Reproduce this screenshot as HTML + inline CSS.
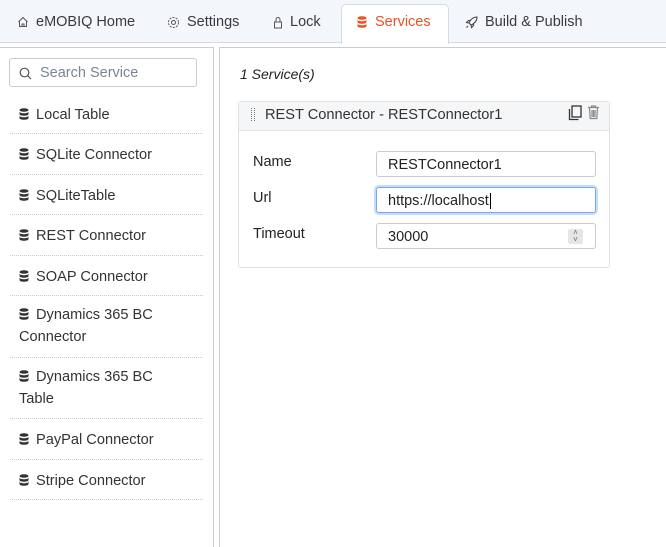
<!DOCTYPE html>
<html><head><meta charset="utf-8"><style>
*{box-sizing:border-box;margin:0;padding:0}
body{width:666px;height:543px;background:#fff;font-family:"Liberation Sans",sans-serif;color:#333;position:relative;overflow:hidden;font-size:14px}
.bar{position:absolute;left:0;top:0;width:666px;height:43px;background:#f3f6fb;border-bottom:1px solid #d6dbe3}
.tab{position:absolute;top:14px;font-size:14.5px;color:#3a3a3a;display:flex;align-items:center;gap:7px}
.act{position:absolute;left:341px;top:4px;width:108px;height:40px;background:#fff;border:1px solid #d6dbe3;border-bottom:none;border-radius:5px 5px 0 0}
.lp{position:absolute;left:0;top:47px;width:214px;height:500px;border-right:1px solid #ccc;border-top:1px solid #ccc}
.rp{position:absolute;left:219px;top:47px;width:460px;height:500px;border-left:1px solid #ccc;border-top:1px solid #ccc}
.search{position:absolute;left:9px;top:58px;width:188px;height:29px;border:1px solid #ccc;border-radius:3px;color:#7a8594;font-size:14.5px;padding:6px 0 0 30px}
.item{position:absolute;left:10px;width:193px;border-bottom:1px dotted #ccc;font-size:14.6px;color:#333;padding:10px 40px 0 9px;line-height:22px}
.db{display:inline-block;width:10px;height:12px;margin-right:7px;vertical-align:-1px}
.card{position:absolute;left:238px;top:101px;width:372px;height:167px;border:1px solid #e3e3e3;border-radius:3px}
.ch{height:29px;background:#f5f6f8;border-bottom:1px solid #e6e6e6}
.lbl{position:absolute;left:253px;font-size:14.5px;color:#222}
.inp{position:absolute;left:376px;width:220px;height:26px;border:1px solid #ccc;border-radius:3px;font-size:14.5px;padding:5px 0 0 11px;color:#222}
</style></head><body>
<div class="bar"></div>
<div class="act"></div>
<div class="tab" style="left:17px"><svg width="12" height="12" viewBox="0 0 12 12" fill="none" stroke="#555" stroke-width="1"><path d="M1.5 6 6 1.5 10.5 6M2.5 5v5.5h7V5M5 10.5V8h2v2.5"/></svg>eMOBIQ Home</div>
<div class="tab" style="left:167px"><svg width="13" height="13" viewBox="0 0 13 13" fill="none" stroke="#555" stroke-width="1"><circle cx="6.5" cy="6.5" r="2"/><circle cx="6.5" cy="6.5" r="5" stroke-dasharray="2 1.2"/></svg>Settings</div>
<div class="tab" style="left:273px"><svg width="10" height="13" viewBox="0 0 10 13" fill="none" stroke="#555" stroke-width="1"><rect x="1.5" y="6" width="7" height="6"/><path d="M3 6V3.5a2 2 0 0 1 4 0V6"/></svg>Lock</div>
<div class="tab" style="left:357px;color:#f04e23;gap:8px"><svg width="10" height="12" viewBox="0 0 10 12"><g fill="#f04e23"><ellipse cx="5" cy="2" rx="4.5" ry="1.8"/><path d="M.5 3.5c0 2.4 9 2.4 9 0V6c0 2.4-9 2.4-9 0zM.5 7.5c0 2.4 9 2.4 9 0V10c0 2.4-9 2.4-9 0z"/></g></svg>Services</div>
<div class="tab" style="left:465px"><svg width="13" height="13" viewBox="0 0 13 13" fill="none" stroke="#444" stroke-width="1.1"><path d="M12 1C8 1 5 4 4 7l2 2c3-1 6-4 6-8zM4 7 1.5 6.5 3.5 4.5H6M6 9l.5 2.5 2-2V7M3 10l-1.5 1.5"/></svg>Build &amp; Publish</div>
<div class="lp"></div><div class="rp"></div>
<div class="search"><svg style="position:absolute;left:9px;top:8px" width="13" height="13" viewBox="0 0 13 13" fill="none" stroke="#555" stroke-width="1.2"><circle cx="5.5" cy="5.5" r="4.3"/><path d="M8.7 8.7 12 12"/></svg>Search Service</div>
<div class="item" style="top:94px;height:40px">DB Local Table</div>
<div class="item" style="top:134px;height:41px">DB SQLite Connector</div>
<div class="item" style="top:175px;height:40px">DB SQLiteTable</div>
<div class="item" style="top:215px;height:41px">DB REST Connector</div>
<div class="item" style="top:256px;height:40px">DB SOAP Connector</div>
<div class="item" style="top:296px;height:62px;padding-top:8px">DB Dynamics 365 BC Connector</div>
<div class="item" style="top:358px;height:61px;padding-top:8px">DB Dynamics 365 BC Table</div>
<div class="item" style="top:419px;height:41px">DB PayPal Connector</div>
<div class="item" style="top:460px;height:40px">DB Stripe Connector</div>
<div style="position:absolute;left:240px;top:66px;font-style:italic;font-size:14px;color:#222">1 Service(s)</div>
<div class="card"><div class="ch"></div></div>
<div style="position:absolute;left:251px;top:108px;width:4px;height:13px;border-left:1px dotted #777;border-right:1px dotted #777"></div>
<div style="position:absolute;left:265px;top:107px;font-size:14.6px;color:#333">REST Connector - RESTConnector1</div>
<svg style="position:absolute;left:568px;top:105px" width="14" height="16" viewBox="0 0 14 16" fill="none" stroke="#333" stroke-width="1.3"><rect x="4" y="1" width="9" height="11"/><path d="M1.5 4v10.5h9"/></svg>
<svg style="position:absolute;left:587px;top:104px" width="13" height="16" viewBox="0 0 13 16" fill="none" stroke="#888" stroke-width="1.2"><path d="M1 3.5h11M4.5 3.5V2h4v1.5M2.5 3.5l.7 11h6.6l.7-11M5 6v7M6.5 6v7M8 6v7"/></svg>
<div class="lbl" style="top:154px">Name</div>
<div class="lbl" style="top:190px">Url</div>
<div class="lbl" style="top:226px">Timeout</div>
<div class="inp" style="top:151px">RESTConnector1</div>
<div class="inp" style="top:187px;border:1px solid #7aa7e6;box-shadow:0 0 0 2px #c5dcfa">https://localhost<span style="border-left:1px solid #000;margin-left:1px"></span></div>
<div class="inp" style="top:223px">30000<div style="position:absolute;right:12px;top:5px;width:15px;height:15px;background:#e6e6e6;border-radius:2px;font-size:8px;color:#666;text-align:center;line-height:7px">˄<br>˅</div></div>
<script>
document.querySelectorAll('.item').forEach(function(e){
 var t=e.textContent.replace(/^DB /,'');
 e.innerHTML='<svg class="db" viewBox="0 0 10 12"><g fill="#333"><ellipse cx="5" cy="2" rx="4.5" ry="1.8"/><path d="M.5 3.5c0 2.4 9 2.4 9 0V6c0 2.4-9 2.4-9 0zM.5 7.5c0 2.4 9 2.4 9 0V10c0 2.4-9 2.4-9 0z"/></g></svg>'+t;
});
</script>
</body></html>
